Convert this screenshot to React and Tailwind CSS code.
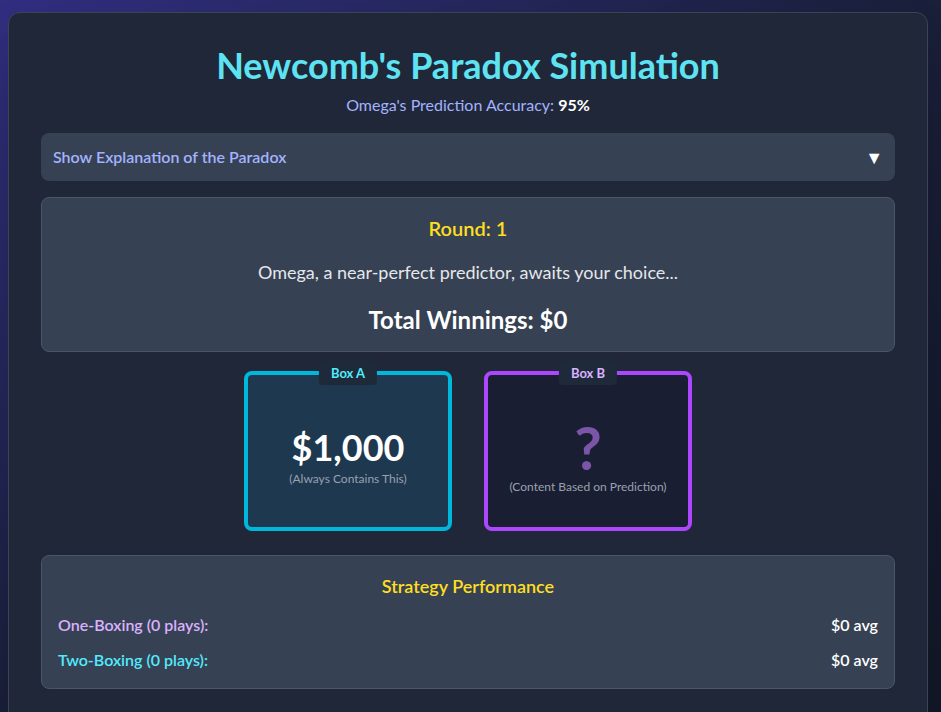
import React, { useState } from "react";

const Stat = ({ label, value, color }) => (
  <div className="flex items-center justify-between">
    <span className={`font-semibold ${color}`}>{label}</span>
    <span className="font-semibold text-white">{value}</span>
  </div>
);

const MysteryBox = ({ title, border, labelColor, bg, children }) => (
  <div className={`relative w-[208px] h-[160px] rounded-lg border-4 pt-3 ${border} ${bg} flex flex-col items-center justify-center`}>
    <span className={`absolute -top-[14px] left-1/2 -translate-x-1/2 bg-gray-800 px-3 rounded text-[13px] leading-6 font-bold ${labelColor}`}>
      {title}
    </span>
    {children}
  </div>
);

export default function App() {
  const [open, setOpen] = useState(false);

  return (
    <div
      className="min-h-screen h-[712px] overflow-hidden bg-gradient-to-br from-[#312e81] via-[#1a1f3a] to-[#111827] px-2 pt-3 text-gray-100"
      style={{ fontFamily: "Lato, 'Noto Sans', sans-serif" }}
    >
      <div className="w-[920px] min-h-[720px] rounded-xl border border-[#3a4456] bg-[#1f2738] px-8 pt-8 shadow-2xl">
        {/* Header */}
        <div className="text-center">
          <h1 className="text-4xl font-bold text-[#5ee3f2] leading-10">Newcomb's Paradox Simulation</h1>
          <p className="mt-2 text-base leading-6 text-indigo-300">
            Omega's Prediction Accuracy: <span className="font-bold text-white">95%</span>
          </p>
        </div>

        {/* Explanation toggle */}
        <button
          onClick={() => setOpen(!open)}
          className="mt-4 flex h-12 w-full items-center justify-between rounded-lg bg-gray-700 px-3 text-left text-base font-semibold text-indigo-300"
        >
          Show Explanation of the Paradox
          <span className="text-white text-lg">▼</span>
        </button>

        {/* Round info */}
        <div className="mt-4 rounded-lg border border-gray-600 bg-gray-700 px-4 pt-4 pb-[15px] text-center">
          <div className="text-xl leading-7 font-semibold text-yellow-300">Round: 1</div>
          <p className="mt-4 text-lg leading-7 text-gray-200">Omega, a near-perfect predictor, awaits your choice...</p>
          <div className="mt-[18px] text-2xl leading-8 font-bold text-white">Total Winnings: $0</div>
        </div>

        {/* Boxes */}
        <div className="mt-[19px] flex justify-center gap-8">
          <MysteryBox title="Box A" border="border-cyan-500" labelColor="text-cyan-300" bg="bg-[#1e3850]">
            <div className="text-4xl font-bold text-white leading-10">$1,000</div>
            <div className="mt-1 text-xs text-gray-400">(Always Contains This)</div>
          </MysteryBox>
          <MysteryBox title="Box B" border="border-purple-500" labelColor="text-purple-300" bg="bg-[#1a1e32]">
            <div className="text-6xl font-bold text-[#7a55a8] leading-[56px]">?</div>
            <div className="mt-1 text-xs text-gray-400">(Content Based on Prediction)</div>
          </MysteryBox>
        </div>

        {/* Strategy */}
        <div className="mt-6 rounded-lg border border-gray-600 bg-gray-700 px-4 pt-4 pb-4">
          <h3 className="text-center text-lg leading-7 font-semibold text-yellow-300">Strategy Performance</h3>
          <div className="mt-[13px] flex flex-col gap-[11px] text-base leading-6">
            <Stat label="One-Boxing (0 plays):" value="$0 avg" color="text-purple-300" />
            <Stat label="Two-Boxing (0 plays):" value="$0 avg" color="text-cyan-300" />
          </div>
        </div>
      </div>
    </div>
  );
}
